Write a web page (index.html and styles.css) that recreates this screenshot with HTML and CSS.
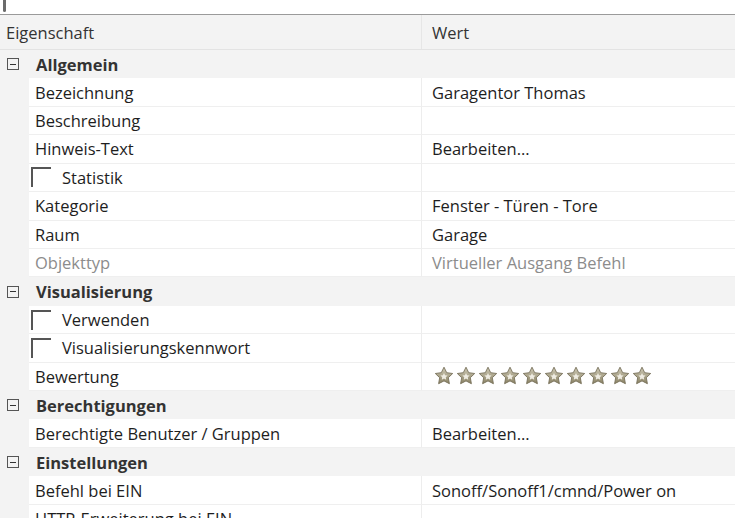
FILE: index.html
```html
<!DOCTYPE html>
<html lang="de">
<head>
<meta charset="utf-8">
<link rel="stylesheet" href="styles.css">
</head>
<body>
<svg width="0" height="0" class="defs"><defs><linearGradient id="sg" x1="0" y1="0" x2="0" y2="1"><stop offset="0" stop-color="#cfcab6"/><stop offset="1" stop-color="#8a8264"/></linearGradient><symbol id="star" viewBox="0 0 20 20"><path d="M10 1.2l2.7 5.5 6 .8-4.4 4.2 1.1 6L10 14.9l-5.4 2.8 1.1-6L1.3 7.5l6-.8z" fill="url(#sg)" stroke="#77705a" stroke-width="0.9"/><path d="M10 7l1.1 2.3 2.5.3-1.8 1.7.4 2.5L10 12.6l-2.2 1.2.4-2.5-1.8-1.7 2.5-.3z" fill="#efece2"/></symbol></defs></svg>
<div class="top"><span class="mark"></span></div>
<div class="grid">
  <div class="header">
    <div class="hcell">Eigenschaft</div>
    <div class="hcell val">Wert</div>
  </div>

  <div class="group"><span class="minus"></span><span class="glabel">Allgemein</span></div>
  <div class="row"><div class="gut"></div><div class="name">Bezeichnung</div><div class="value">Garagentor Thomas</div></div>
  <div class="row"><div class="gut"></div><div class="name">Beschreibung</div><div class="value"></div></div>
  <div class="row"><div class="gut"></div><div class="name">Hinweis-Text</div><div class="value">Bearbeiten...</div></div>
  <div class="row"><div class="gut"></div><div class="name"><span class="check"></span>Statistik</div><div class="value"></div></div>
  <div class="row"><div class="gut"></div><div class="name">Kategorie</div><div class="value">Fenster - Türen - Tore</div></div>
  <div class="row"><div class="gut"></div><div class="name">Raum</div><div class="value">Garage</div></div>
  <div class="row dim"><div class="gut"></div><div class="name">Objekttyp</div><div class="value">Virtueller Ausgang Befehl</div></div>

  <div class="group"><span class="minus"></span><span class="glabel">Visualisierung</span></div>
  <div class="row"><div class="gut"></div><div class="name"><span class="check"></span>Verwenden</div><div class="value"></div></div>
  <div class="row"><div class="gut"></div><div class="name"><span class="check"></span>Visualisierungskennwort</div><div class="value"></div></div>
  <div class="row"><div class="gut"></div><div class="name">Bewertung</div><div class="value stars">
    <svg class="star"><use href="#star"/></svg>
    <svg class="star"><use href="#star"/></svg>
    <svg class="star"><use href="#star"/></svg>
    <svg class="star"><use href="#star"/></svg>
    <svg class="star"><use href="#star"/></svg>
    <svg class="star"><use href="#star"/></svg>
    <svg class="star"><use href="#star"/></svg>
    <svg class="star"><use href="#star"/></svg>
    <svg class="star"><use href="#star"/></svg>
    <svg class="star"><use href="#star"/></svg>
  </div></div>

  <div class="group"><span class="minus"></span><span class="glabel">Berechtigungen</span></div>
  <div class="row"><div class="gut"></div><div class="name">Berechtigte Benutzer / Gruppen</div><div class="value">Bearbeiten...</div></div>

  <div class="group"><span class="minus"></span><span class="glabel">Einstellungen</span></div>
  <div class="row"><div class="gut"></div><div class="name">Befehl bei EIN</div><div class="value">Sonoff/Sonoff1/cmnd/Power on</div></div>
  <div class="row"><div class="gut"></div><div class="name">HTTP-Erweiterung bei EIN</div><div class="value"></div></div>
</div>
</body>
</html>
```

FILE: styles.css
```css
html, body {
  margin: 0;
  padding: 0;
  background: #ffffff;
  overflow: hidden;
}
body {
  width: 735px;
  height: 518px;
  font-family: "Open Sans", "Noto Sans", sans-serif;
  font-size: 16.5px;
  letter-spacing: 0;
  color: #1e1e1e;
}
.defs {
  position: absolute;
  width: 0;
  height: 0;
}
.top {
  height: 14px;
  background: #ffffff;
  border-bottom: 1px solid #9a9a9a;
  position: relative;
}
.mark {
  position: absolute;
  left: 3px;
  top: 0;
  width: 3px;
  height: 12px;
  background: #6b6b6b;
  border-radius: 0 0 2px 2px;
}
.grid {
  display: flex;
  flex-direction: column;
  background: #f3f3f3;
}
.header {
  display: grid;
  grid-template-columns: 421px 1fr;
  height: 34px;
  border-bottom: 1px solid #e3e3e3;
  background: #f3f3f3;
  color: #333;
}
.hcell {
  display: flex;
  align-items: center;
  padding-left: 6px;
}
.hcell.val {
  border-left: 1px solid #e6e6e6;
  padding-left: 10px;
}
.group {
  display: flex;
  align-items: center;
  height: 28.43px;
  box-sizing: border-box;
  background: #f3f3f3;
}
.minus {
  width: 10px;
  height: 10px;
  border: 1px solid #555;
  margin-left: 7px;
  margin-right: 17px;
  position: relative;
  flex: none;
}
.minus::after {
  content: "";
  position: absolute;
  left: 2px;
  right: 2px;
  top: 4.5px;
  height: 1px;
  background: #333;
}
.glabel {
  font-weight: 700;
  color: #333;
}
.row {
  display: grid;
  grid-template-columns: 29px 392px 1fr;
  height: 28.43px;
  box-sizing: border-box;
}
.gut {
  background: #f3f3f3;
}
.name {
  background: #fff;
  border-bottom: 1px solid #efefef;
  display: flex;
  align-items: center;
  padding-left: 6px;
  white-space: nowrap;
  overflow: hidden;
}
.value {
  background: #fff;
  border-bottom: 1px solid #efefef;
  border-left: 1px solid #ededed;
  display: flex;
  align-items: center;
  padding-left: 10px;
  white-space: nowrap;
  overflow: hidden;
}
.dim .name, .dim .value {
  color: #8c8c8c;
}
.check {
  width: 20px;
  height: 20px;
  box-sizing: border-box;
  border-top: 2px solid #555;
  border-left: 2px solid #555;
  margin-left: -4px;
  margin-right: 11px;
  flex: none;
}
.stars {
  gap: 2px;
  padding-left: 12px;
}
.star {
  width: 20px;
  height: 20px;
  flex: none;
}
```
